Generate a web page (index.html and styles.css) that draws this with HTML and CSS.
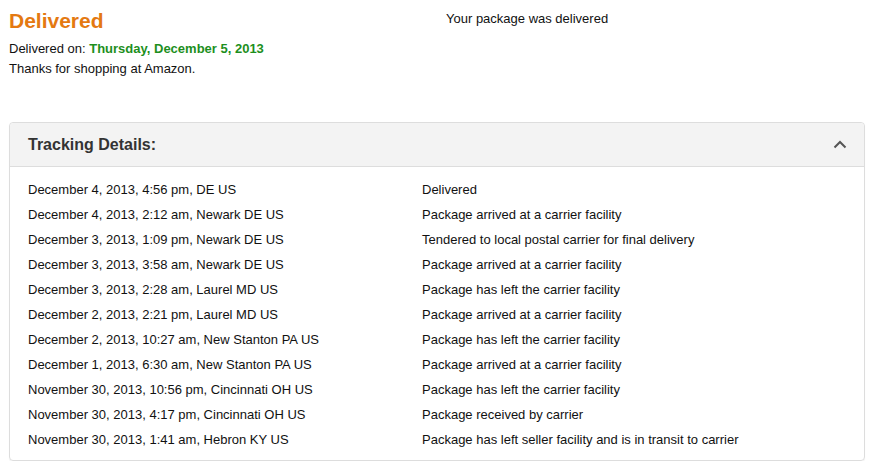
FILE: index.html
```html
<!DOCTYPE html>
<html>
<head>
<meta charset="utf-8">
<link rel="stylesheet" href="styles.css">
</head>
<body>
<div class="page">
  <div class="top">
    <div class="status">
      <h1 class="title">Delivered</h1>
      <div class="line">Delivered on: <span class="date">Thursday, December 5, 2013</span></div>
      <div class="line">Thanks for shopping at Amazon.</div>
    </div>
    <div class="msg">Your package was delivered</div>
  </div>
  <div class="box">
    <div class="box-head">
      <span class="box-title">Tracking Details:</span>
      <svg class="chev" width="14" height="9" viewBox="0 0 14 9"><path d="M1.5 7.5 L7 2 L12.5 7.5" fill="none" stroke="#555" stroke-width="2"/></svg>
    </div>
    <div class="rows">
      <div class="row"><span class="when">December 4, 2013, 4:56 pm, DE US</span><span class="what">Delivered</span></div>
      <div class="row"><span class="when">December 4, 2013, 2:12 am, Newark DE US</span><span class="what">Package arrived at a carrier facility</span></div>
      <div class="row"><span class="when">December 3, 2013, 1:09 pm, Newark DE US</span><span class="what">Tendered to local postal carrier for final delivery</span></div>
      <div class="row"><span class="when">December 3, 2013, 3:58 am, Newark DE US</span><span class="what">Package arrived at a carrier facility</span></div>
      <div class="row"><span class="when">December 3, 2013, 2:28 am, Laurel MD US</span><span class="what">Package has left the carrier facility</span></div>
      <div class="row"><span class="when">December 2, 2013, 2:21 pm, Laurel MD US</span><span class="what">Package arrived at a carrier facility</span></div>
      <div class="row"><span class="when">December 2, 2013, 10:27 am, New Stanton PA US</span><span class="what">Package has left the carrier facility</span></div>
      <div class="row"><span class="when">December 1, 2013, 6:30 am, New Stanton PA US</span><span class="what">Package arrived at a carrier facility</span></div>
      <div class="row"><span class="when">November 30, 2013, 10:56 pm, Cincinnati OH US</span><span class="what">Package has left the carrier facility</span></div>
      <div class="row"><span class="when">November 30, 2013, 4:17 pm, Cincinnati OH US</span><span class="what">Package received by carrier</span></div>
      <div class="row"><span class="when">November 30, 2013, 1:41 am, Hebron KY US</span><span class="what">Package has left seller facility and is in transit to carrier</span></div>
    </div>
  </div>
</div>
</body>
</html>
```
FILE: styles.css
```css
html, body {
  margin: 0;
  padding: 0;
  background: #fff;
}
body {
  font-family: "Liberation Sans", Arial, sans-serif;
  font-size: 13px;
  color: #111;
}
.page {
  padding: 9px 15px 0 9px;
}
.top {
  display: flex;
  height: 113px;
}
.status {
  width: 437px;
}
.title {
  margin: 0;
  font-size: 21px;
  line-height: 24px;
  font-weight: bold;
  color: #e47911;
}
.line {
  line-height: 20px;
}
.line:first-of-type {
  margin-top: 6px;
}
.date {
  font-weight: bold;
  color: #1d8f1d;
}
.msg {
  padding-top: 3px;
  line-height: 14px;
}
.box {
  border: 1px solid #ddd;
  border-radius: 4px;
  box-shadow: 0 1px 1px rgba(0,0,0,0.06);
}
.box-head {
  display: flex;
  align-items: center;
  justify-content: space-between;
  height: 43px;
  padding: 0 17px 0 18px;
  background: #f3f3f3;
  border-bottom: 1px solid #ddd;
  border-radius: 4px 4px 0 0;
}
.box-title {
  font-size: 16px;
  font-weight: bold;
  color: #333;
}
.chev {
  display: block;
}
.rows {
  padding: 10px 18px 8px 18px;
}
.row {
  display: grid;
  grid-template-columns: 394px 1fr;
  height: 25px;
  line-height: 25px;
}
```
